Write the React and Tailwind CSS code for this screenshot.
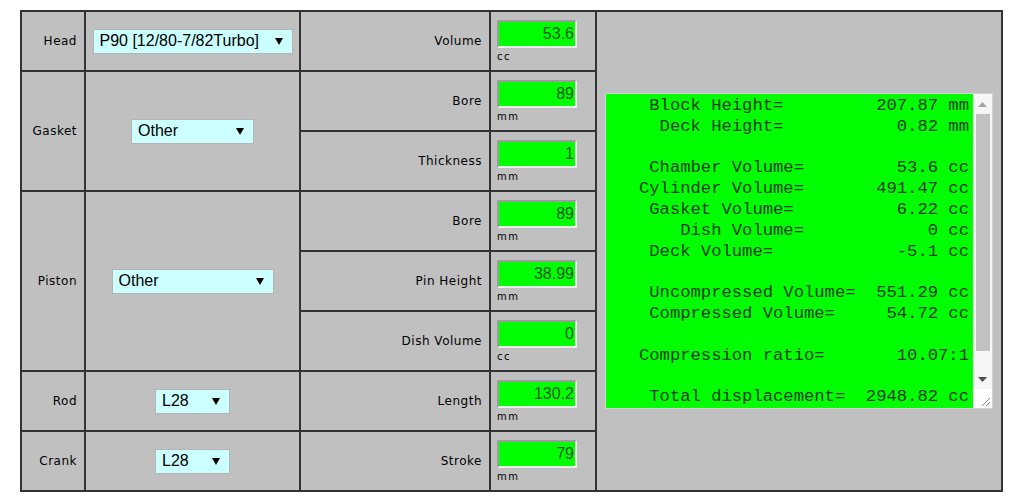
const label = "font-['DejaVu_Sans',sans-serif] text-[12px] tracking-[0.5px] text-black"

function Select({ value, width }) {
  return (
    <div
      className={`${width} mx-auto flex h-[25px] items-center justify-between border border-[#b4b4b4] bg-[#ccffff] pl-[6px] pr-[9px] font-['Liberation_Sans',Arial,sans-serif] text-[16px] text-black`}
    >
      <span className="whitespace-nowrap">{value}</span>
      <svg width="8" height="7" viewBox="0 0 8 7" className="shrink-0">
        <polygon points="0,0 8,0 4,7" fill="#000" />
      </svg>
    </div>
  )
}

function Field({ value, unit }) {
  return (
    <div className="flex flex-col items-start pl-[6px]">
      <div className="flex h-[28px] w-[80px] items-center justify-end border-2 border-t-[#9c9c9c] border-l-[#9c9c9c] border-b-[#ececec] border-r-[#ececec] bg-[#00ff00] pr-[1px] font-['Liberation_Sans',Arial,sans-serif] text-[16px] text-[#1d571d]">
        {value}
      </div>
      <div className="mt-[2px] font-['DejaVu_Sans',sans-serif] text-[10px] leading-[13px] tracking-[1.5px] text-black">
        {unit}
      </div>
    </div>
  )
}

const line = (indent, text, value, unit) =>
  (' '.repeat(indent) + text).padEnd(32 - value.length) + value + (unit ? ' ' + unit : '')

const results = [
  line(4, 'Block Height=', '207.87', 'mm'),
  line(5, 'Deck Height=', '0.82', 'mm'),
  '',
  line(4, 'Chamber Volume=', '53.6', 'cc'),
  line(3, 'Cylinder Volume=', '491.47', 'cc'),
  line(4, 'Gasket Volume=', '6.22', 'cc'),
  line(7, 'Dish Volume=', '0', 'cc'),
  line(4, 'Deck Volume=', '-5.1', 'cc'),
  '',
  line(4, 'Uncompressed Volume=', '551.29', 'cc'),
  line(4, 'Compressed Volume=', '54.72', 'cc'),
  '',
  '   Compression ratio='.padEnd(28) + '10.07:1',
  '',
  line(4, 'Total displacement=', '2948.82', 'cc'),
].join('\n')

function Results() {
  return (
    <div className="mx-auto flex h-[316px] w-[388px] border border-[#d2d2d2]">
      <div className="min-w-0 flex-1 overflow-hidden bg-[#00ff00] pl-[2px] pt-[2px]">
        <pre className="font-['Liberation_Mono','Courier_New',monospace] text-[17.2px] leading-[20.8px] text-[#123d12]">
          {results}
        </pre>
      </div>
      <div className="flex w-[19px] flex-col bg-[#f6f6f6]">
        <div className="flex h-[20px] items-center justify-center">
          <svg width="9" height="5" viewBox="0 0 9 5">
            <polygon points="0,5 4.5,0 9,5" fill="#a3a3a3" />
          </svg>
        </div>
        <div className="mx-auto h-[237px] w-[14px] bg-[#c1c1c1]" />
        <div className="flex-1" />
        <div className="flex h-[20px] items-center justify-center">
          <svg width="9" height="5" viewBox="0 0 9 5">
            <polygon points="0,0 9,0 4.5,5" fill="#505050" />
          </svg>
        </div>
        <div className="flex h-[19px] items-end justify-end bg-white pb-[2px] pr-[2px]">
          <svg width="10" height="10" viewBox="0 0 10 10">
            <line x1="2" y1="10" x2="10" y2="2" stroke="#8a8a8a" strokeWidth="1" />
            <line x1="6" y1="10" x2="10" y2="6" stroke="#8a8a8a" strokeWidth="1" />
          </svg>
        </div>
      </div>
    </div>
  )
}

const cell = 'border-2 border-[#333] align-middle'

export default function App() {
  return (
    <div className="min-h-[500px] bg-white pl-[20px] pt-[10px]">
      <table className="w-[981px] table-fixed border-collapse bg-[#c0c0c0]">
        <colgroup>
          <col className="w-[64px]" />
          <col className="w-[215px]" />
          <col className="w-[190px]" />
          <col className="w-[106px]" />
          <col className="w-[406px]" />
        </colgroup>
        <tbody>
          <tr className="h-[60px]">
            <td className={`${cell} pr-[7px] text-right ${label}`}>Head</td>
            <td className={cell}>
              <Select value="P90 [12/80-7/82Turbo]" width="w-[200px]" />
            </td>
            <td className={`${cell} pr-[7px] text-right ${label}`}>Volume</td>
            <td className={cell}>
              <Field value="53.6" unit="cc" />
            </td>
            <td className={`${cell} px-[8px]`} rowSpan={8}>
              <Results />
            </td>
          </tr>
          <tr className="h-[60px]">
            <td className={`${cell} pr-[7px] text-right ${label}`} rowSpan={2}>Gasket</td>
            <td className={cell} rowSpan={2}>
              <Select value="Other" width="w-[123px]" />
            </td>
            <td className={`${cell} pr-[7px] text-right ${label}`}>Bore</td>
            <td className={cell}>
              <Field value="89" unit="mm" />
            </td>
          </tr>
          <tr className="h-[60px]">
            <td className={`${cell} pr-[7px] text-right ${label}`}>Thickness</td>
            <td className={cell}>
              <Field value="1" unit="mm" />
            </td>
          </tr>
          <tr className="h-[60px]">
            <td className={`${cell} pr-[7px] text-right ${label}`} rowSpan={3}>Piston</td>
            <td className={cell} rowSpan={3}>
              <Select value="Other" width="w-[162px]" />
            </td>
            <td className={`${cell} pr-[7px] text-right ${label}`}>Bore</td>
            <td className={cell}>
              <Field value="89" unit="mm" />
            </td>
          </tr>
          <tr className="h-[60px]">
            <td className={`${cell} pr-[7px] text-right ${label}`}>Pin Height</td>
            <td className={cell}>
              <Field value="38.99" unit="mm" />
            </td>
          </tr>
          <tr className="h-[60px]">
            <td className={`${cell} pr-[7px] text-right ${label}`}>Dish Volume</td>
            <td className={cell}>
              <Field value="0" unit="cc" />
            </td>
          </tr>
          <tr className="h-[60px]">
            <td className={`${cell} pr-[7px] text-right ${label}`}>Rod</td>
            <td className={cell}>
              <Select value="L28" width="w-[75px]" />
            </td>
            <td className={`${cell} pr-[7px] text-right ${label}`}>Length</td>
            <td className={cell}>
              <Field value="130.2" unit="mm" />
            </td>
          </tr>
          <tr className="h-[60px]">
            <td className={`${cell} pr-[7px] text-right ${label}`}>Crank</td>
            <td className={cell}>
              <Select value="L28" width="w-[75px]" />
            </td>
            <td className={`${cell} pr-[7px] text-right ${label}`}>Stroke</td>
            <td className={cell}>
              <Field value="79" unit="mm" />
            </td>
          </tr>
        </tbody>
      </table>
    </div>
  )
}
